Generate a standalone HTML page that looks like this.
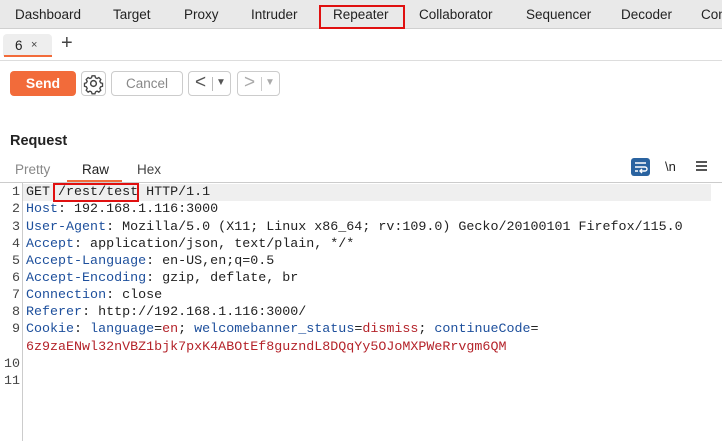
<!DOCTYPE html>
<html><head><style>
body{margin:0;width:722px;height:441px;background:#fff;font-family:"Liberation Sans",sans-serif;position:relative;overflow:hidden;color:#222}
.a{position:absolute}
.top{left:0;top:0;width:722px;height:28px;background:#e9e9e9;border-bottom:1px solid #d0d0d0}
.top span{position:absolute;top:7px;font-size:13.5px;color:#222}
.mono{font-family:"Liberation Mono",monospace;font-size:13.35px;position:absolute;left:0;top:1px;width:722px}
.ln{position:absolute;left:0;width:20px;text-align:right;color:#444}
.cl{position:absolute;left:26px;white-space:pre;color:#222}
.k{color:#1d4f9c}.r{color:#b4232a}
.btn{border:1px solid #ccc;border-radius:4px;background:#fff;box-sizing:border-box}
</style></head><body>
<div class="a top">
<span style="left:15px">Dashboard</span>
<span style="left:113px">Target</span>
<span style="left:184px">Proxy</span>
<span style="left:251px">Intruder</span>
<span style="left:333px">Repeater</span>
<span style="left:419px">Collaborator</span>
<span style="left:526px">Sequencer</span>
<span style="left:621px">Decoder</span>
<span style="left:701px">Com</span>
</div>
<div class="a" style="left:319px;top:5px;width:86px;height:24px;border:2px solid #e01010;box-sizing:border-box"></div>
<div class="a" style="left:3px;top:34px;width:49px;height:22px;background:#eee;border-radius:4px 4px 0 0"></div>
<div class="a" style="left:4px;top:55px;width:48px;height:2px;background:#f26b3a"></div>
<div class="a" style="left:15px;top:38px;font-size:13.5px">6</div>
<div class="a" style="left:31px;top:39px;font-size:11px;color:#444">×</div>
<div class="a" style="left:61px;top:32px;font-size:20px;color:#444">+</div>
<div class="a" style="left:0;top:60px;width:722px;height:1px;background:#ddd"></div>
<div class="a" style="left:10px;top:71px;width:66px;height:25px;background:#f26b3a;border-radius:4px;color:#fff;font-weight:bold;font-size:14px;text-align:center;line-height:25px">Send</div>
<div class="a btn" style="left:81px;top:71px;width:25px;height:25px"><svg width="23" height="23" viewBox="0 0 24 24" style="position:absolute;left:0;top:0"><circle cx="12" cy="12" r="3" fill="none" stroke="#444" stroke-width="1.5"/><path d="M12 4l1.5 0 .6 2 1.6.8 1.9-1 2 2-1 1.9.8 1.6 2 .6v3l-2 .6-.8 1.6 1 1.9-2 2-1.9-1-1.6.8-.6 2h-3l-.6-2-1.6-.8-1.9 1-2-2 1-1.9-.8-1.6-2-.6v-3l2-.6.8-1.6-1-1.9 2-2 1.9 1 1.6-.8.6-2z" fill="none" stroke="#444" stroke-width="1.4"/></svg></div>
<div class="a btn" style="left:111px;top:71px;width:72px;height:25px;color:#888;font-size:13.5px;text-align:center;line-height:23px">Cancel</div>
<div class="a btn" style="left:188px;top:71px;width:43px;height:25px;color:#555"><span style="position:absolute;left:6px;top:0;font-size:19px">&lt;</span><span style="position:absolute;left:23px;top:5px;width:1px;height:14px;background:#bbb"></span><span style="position:absolute;left:27px;top:5px;font-size:10px">▼</span></div>
<div class="a btn" style="left:237px;top:71px;width:43px;height:25px;color:#aaa"><span style="position:absolute;left:6px;top:0;font-size:19px">&gt;</span><span style="position:absolute;left:23px;top:5px;width:1px;height:14px;background:#ccc"></span><span style="position:absolute;left:27px;top:5px;font-size:10px">▼</span></div>
<div class="a" style="left:10px;top:133px;font-weight:bold;font-size:14.5px">Request</div>
<div class="a" style="left:15px;top:162px;font-size:13.5px;color:#888">Pretty</div>
<div class="a" style="left:82px;top:162px;font-size:13.5px">Raw</div>
<div class="a" style="left:67px;top:180px;width:55px;height:2px;background:#f26b3a"></div>
<div class="a" style="left:137px;top:162px;font-size:13.5px;color:#444">Hex</div>
<div class="a" style="left:631px;top:158px;width:19px;height:18px;background:#2a63a0;border-radius:3px"><svg width="19" height="18" viewBox="0 0 19 18"><path d="M4 5h11M4 9h10a2 2 0 0 1 0 4h-4M11 11l-2 2 2 2M4 13h3" stroke="#fff" stroke-width="1.4" fill="none"/></svg></div>
<div class="a" style="left:665px;top:159px;font-size:13px">\n</div>
<div class="a" style="left:696px;top:161px;width:11px;height:10px;border-top:2px solid #555;border-bottom:2px solid #555;box-sizing:border-box"><div style="margin-top:2px;height:2px;background:#555"></div></div>
<div class="a" style="left:0;top:182px;width:722px;height:1px;background:#ccc"></div>
<div class="a" style="left:22px;top:183px;width:1px;height:258px;background:#ccc"></div>
<div class="a" style="left:23px;top:184px;width:688px;height:17px;background:#efefef"></div>
<div class="a" style="left:53px;top:183px;width:86px;height:19px;border:2px solid #e01010;box-sizing:border-box"></div>
<div class="mono">
<div class="ln" style="top:184px">1</div><div class="cl" style="top:184px">GET /rest/test HTTP/1.1</div>
<div class="ln" style="top:201px">2</div><div class="cl" style="top:201px"><span class="k">Host</span>: 192.168.1.116:3000</div>
<div class="ln" style="top:219px">3</div><div class="cl" style="top:219px"><span class="k">User-Agent</span>: Mozilla/5.0 (X11; Linux x86_64; rv:109.0) Gecko/20100101 Firefox/115.0</div>
<div class="ln" style="top:236px">4</div><div class="cl" style="top:236px"><span class="k">Accept</span>: application/json, text/plain, */*</div>
<div class="ln" style="top:253px">5</div><div class="cl" style="top:253px"><span class="k">Accept-Language</span>: en-US,en;q=0.5</div>
<div class="ln" style="top:270px">6</div><div class="cl" style="top:270px"><span class="k">Accept-Encoding</span>: gzip, deflate, br</div>
<div class="ln" style="top:287px">7</div><div class="cl" style="top:287px"><span class="k">Connection</span>: close</div>
<div class="ln" style="top:304px">8</div><div class="cl" style="top:304px"><span class="k">Referer</span>: http://192.168.1.116:3000/</div>
<div class="ln" style="top:321px">9</div><div class="cl" style="top:321px"><span class="k">Cookie</span>: <span class="k">language</span>=<span class="r">en</span>; <span class="k">welcomebanner_status</span>=<span class="r">dismiss</span>; <span class="k">continueCode</span>=</div>
<div class="cl r" style="top:339px">6z9zaENwl32nVBZ1bjk7pxK4ABOtEf8guzndL8DQqYy5OJoMXPWeRrvgm6QM</div>
<div class="ln" style="top:356px">10</div>
<div class="ln" style="top:373px">11</div>
</div>
</body></html>
